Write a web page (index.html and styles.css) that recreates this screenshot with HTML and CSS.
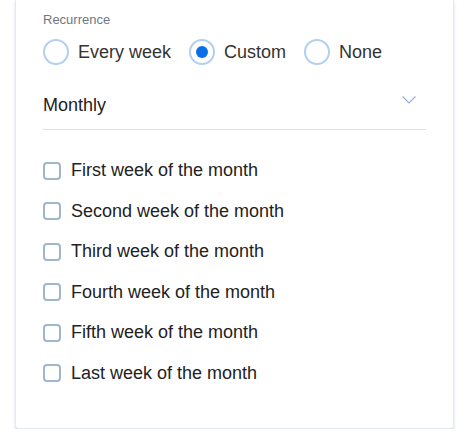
FILE: index.html
```html
<!DOCTYPE html>
<html lang="en">
<head>
  <meta charset="UTF-8" />
  <meta name="viewport" content="width=device-width, initial-scale=1.0"/>
  <title>Recurrence</title>
  <link rel="stylesheet" href="styles.css">
</head>
<body>
  <div class="card">
    <div class="field-label">Recurrence</div>
    <div class="radio-row">
      <label class="radio"><span class="radio-ring"></span>Every week</label>
      <label class="radio"><span class="radio-ring checked"></span>Custom</label>
      <label class="radio"><span class="radio-ring"></span>None</label>
    </div>

    <div class="select">
      <span>Monthly</span>
      <svg class="chevron" width="14" height="8" viewBox="0 0 14 8">
        <path d="M0.5 0.5 L7 7 L13.5 0.5" fill="none" stroke="#8fb0d6" stroke-width="1.2"/>
      </svg>
    </div>

    <ul class="weeks">
      <li><span class="box"></span>First week of the month</li>
      <li><span class="box"></span>Second week of the month</li>
      <li><span class="box"></span>Third week of the month</li>
      <li><span class="box"></span>Fourth week of the month</li>
      <li><span class="box"></span>Fifth week of the month</li>
      <li><span class="box"></span>Last week of the month</li>
    </ul>
  </div>
</body>
</html>
```

FILE: styles.css
```css
body {
  margin: 0;
  font-family: 'Liberation Sans', Arial, sans-serif;
  background: #fff;
  color: #222;
}

.card {
  margin: 0 12px 0 15px;
  padding: 12px 27px 44px 27px;
  background: #fff;
  border: 1px solid #e3e9f2;
  border-top: none;
  border-radius: 0 0 4px 4px;
  box-shadow: 0 2px 3px rgba(120, 145, 190, 0.3);
}

.field-label {
  font-size: 13px;
  color: #6f7782;
  margin-bottom: 12px;
}

.radio-row {
  display: flex;
  gap: 18px;
}

.radio {
  display: flex;
  align-items: center;
  gap: 9px;
  font-size: 18px;
  color: #333;
}

.radio-ring {
  width: 22px;
  height: 22px;
  border: 2px solid #b3cff0;
  border-radius: 50%;
  display: flex;
  align-items: center;
  justify-content: center;
}

.radio-ring.checked::after {
  content: "";
  width: 12px;
  height: 12px;
  border-radius: 50%;
  background: #0a6fe6;
}

.select {
  display: flex;
  justify-content: space-between;
  align-items: center;
  margin-top: 17px;
  padding: 13px 10px 13px 0;
  border-bottom: 1px solid #d6e3f1;
  font-size: 18px;
  line-height: 21px;
  color: #222;
}

.chevron {
  margin-top: -12px;
}

.weeks {
  list-style: none;
  margin: 30px 0 0 0;
  padding: 0;
  display: flex;
  flex-direction: column;
  gap: 19.6px;
}

.weeks li {
  display: flex;
  align-items: center;
  gap: 10px;
  font-size: 18px;
  line-height: 21px;
  color: #222;
}

.box {
  width: 14px;
  height: 14px;
  border: 2px solid #9fb6d1;
  border-radius: 4px;
}
```
